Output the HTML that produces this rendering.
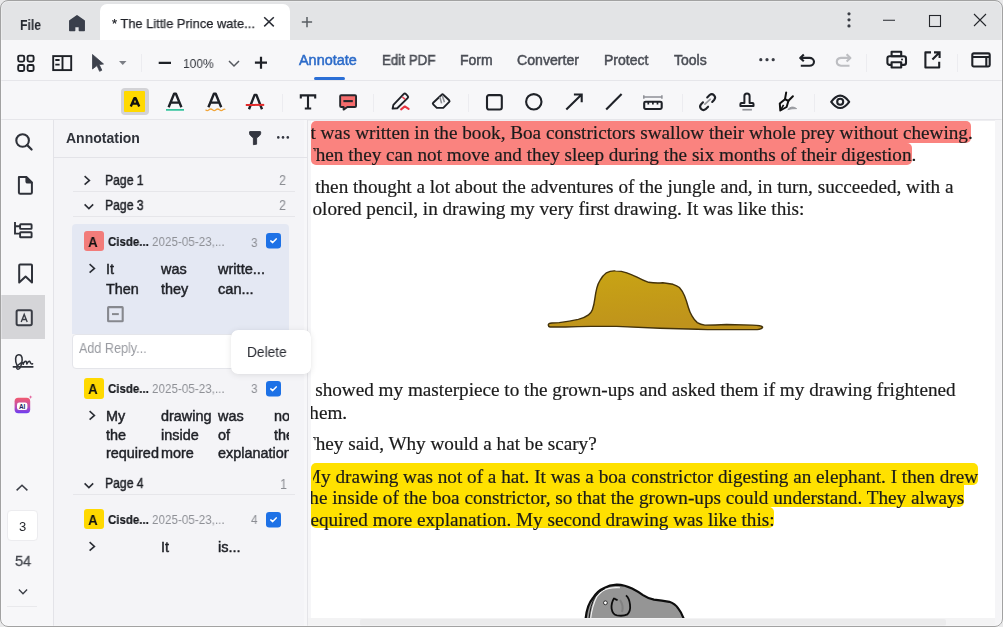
<!DOCTYPE html>
<html><head><meta charset="utf-8">
<style>
*{box-sizing:border-box;margin:0;padding:0}
html,body{width:1003px;height:627px;overflow:hidden;background:#e9e9ea}
body{font-family:"Liberation Sans",sans-serif;position:relative}
.abs{position:absolute}
#win{position:absolute;left:0;top:0;width:1003px;height:627px;border-radius:8px;overflow:hidden;background:#f7f7f9}
#frame{position:absolute;left:0;top:0;width:1003px;height:627px;border-radius:8px;border:1px solid #a2a2a2;box-shadow:inset 0 0 0 1px rgba(255,255,255,0.3);pointer-events:none}
svg{position:absolute;overflow:visible}
.t{position:absolute;white-space:nowrap;line-height:1;will-change:transform}
</style></head><body>
<div id="win">
<div class="abs" style="left:0px;top:0px;width:1003px;height:40px;background:#e3e4e6;"></div>
<div class="t" style="left:20.20px;top:18.45px;font-size:14px;font-weight:700;color:#25282f;font-family:'Liberation Sans',sans-serif;transform:scaleX(0.875);transform-origin:0 0;">File</div>
<svg style="left:66px;top:12px" width="22" height="22" viewBox="0 0 22 22"><path d="M3.8 8.9 L11 3.8 L18.2 8.9 V18.6 H13.4 V14.6 H8.6 V18.6 H3.8 Z" fill="#3a3f4b" stroke="#3a3f4b" stroke-width="1.5" stroke-linejoin="round"/></svg>
<div class="abs" style="left:100px;top:4px;width:190px;height:36px;background:#ffffff;border-radius:7px 7px 0 0;"></div>
<div class="t" style="left:112.00px;top:16.90px;font-size:13px;font-weight:400;color:#1f2127;font-family:'Liberation Sans',sans-serif;transform:scaleX(0.99);transform-origin:0 0;-webkit-text-stroke:0.25px #1f2127;">* The Little Prince wate...</div>
<svg style="left:262px;top:15px" width="14" height="14" viewBox="0 0 14 14"><path d="M2.2 2.3 L11.8 11.4 M11.8 2.3 L2.2 11.4" stroke="#2a2d35" stroke-width="1.5" fill="none"/></svg>
<svg style="left:300px;top:15px" width="14" height="14" viewBox="0 0 14 14"><path d="M7 1.9 V12.3 M1.8 7.1 H12.1" stroke="#5a5d63" stroke-width="1.5" fill="none"/></svg>
<svg style="left:844px;top:10px" width="10" height="20" viewBox="0 0 10 20"><circle cx="5" cy="3.8" r="1.6" fill="#3a3d45"/><circle cx="5" cy="9.8" r="1.6" fill="#3a3d45"/><circle cx="5" cy="15.9" r="1.6" fill="#3a3d45"/></svg>
<svg style="left:880px;top:14px" width="18" height="12" viewBox="0 0 18 12"><path d="M3 6.3 H15" stroke="#25272c" stroke-width="1.1"/></svg>
<svg style="left:926px;top:12px" width="18" height="18" viewBox="0 0 18 18"><rect x="3.5" y="3.5" width="11" height="11" fill="none" stroke="#25272c" stroke-width="1.1"/></svg>
<svg style="left:971px;top:11px" width="18" height="18" viewBox="0 0 18 18"><path d="M3 3 L15 15 M15 3 L3 15" stroke="#25272c" stroke-width="1.1"/></svg>
<div class="abs" style="left:0px;top:40px;width:1003px;height:40px;background:#f7f7f9;"></div>
<div class="abs" style="left:0px;top:80px;width:1003px;height:1px;background:#e6e6ea;"></div>
<svg style="left:16px;top:54px" width="20" height="19" viewBox="0 0 20 19"><g fill="none" stroke="#1e2127" stroke-width="1.9"><rect x="2.2" y="1.6" width="6" height="6" rx="1.5"/><rect x="11.6" y="1.6" width="6" height="6" rx="1.5"/><rect x="2.2" y="11" width="6" height="6" rx="1.5"/><rect x="11.6" y="11" width="6" height="6" rx="1.5"/></g></svg>
<svg style="left:51px;top:54px" width="22" height="18" viewBox="0 0 22 18"><g fill="none" stroke="#1e2127" stroke-width="1.9"><rect x="2.2" y="2.1" width="18" height="14"/><path d="M11.5 2.1 V16.1"/></g><path d="M4.3 6 H8.6 M4.3 10.6 H8.6" stroke="#1e2127" stroke-width="1.8"/></svg>
<svg style="left:90px;top:53px" width="16" height="20" viewBox="0 0 16 20"><path d="M2.5 1.5 L13.5 11 L9.2 11.6 L11.8 17.2 L9.6 18.3 L7 12.6 L2.5 16 Z" fill="#3d414c" stroke="#3d414c" stroke-width="0.8" stroke-linejoin="round"/></svg>
<svg style="left:117px;top:59px" width="12" height="8" viewBox="0 0 12 8"><path d="M2 2 H9.5 L5.75 6 Z" fill="#7b7e85"/></svg>
<div class="abs" style="left:141px;top:54px;width:1px;height:18px;background:#ececf0;"></div>
<svg style="left:156px;top:58px" width="18" height="10" viewBox="0 0 18 10"><path d="M2.7 4.8 H15" stroke="#1e2127" stroke-width="2.2"/></svg>
<div class="t" style="left:183.00px;top:57.20px;font-size:13px;font-weight:400;color:#33363d;font-family:'Liberation Sans',sans-serif;transform:scaleX(0.92);transform-origin:0 0;">100%</div>
<svg style="left:227px;top:58px" width="14" height="10" viewBox="0 0 14 10"><path d="M2 3 L7 8 L12 3" fill="none" stroke="#55585f" stroke-width="1.5"/></svg>
<svg style="left:252px;top:54px" width="18" height="18" viewBox="0 0 18 18"><path d="M9 2.7 V14.7 M2.9 8.7 H15" stroke="#1e2127" stroke-width="2.2"/></svg>
<div class="t" style="left:299.40px;top:53.25px;font-size:14px;font-weight:400;color:#2c6bc9;font-family:'Liberation Sans',sans-serif;transform:scaleX(1.03);transform-origin:0 0;-webkit-text-stroke:0.5px #2c6bc9;">Annotate</div>
<div class="abs" style="left:313.5px;top:77.2px;width:31.5px;height:2.8px;background:#2b6fd6;border-radius:2px;"></div>
<div class="t" style="left:382.00px;top:53.25px;font-size:14px;font-weight:400;color:#4b4e56;font-family:'Liberation Sans',sans-serif;transform:scaleX(0.955);transform-origin:0 0;-webkit-text-stroke:0.5px #4b4e56;">Edit PDF</div>
<div class="t" style="left:460.00px;top:53.25px;font-size:14px;font-weight:400;color:#4b4e56;font-family:'Liberation Sans',sans-serif;transform:scaleX(1.0);transform-origin:0 0;-webkit-text-stroke:0.5px #4b4e56;">Form</div>
<div class="t" style="left:517.00px;top:53.25px;font-size:14px;font-weight:400;color:#4b4e56;font-family:'Liberation Sans',sans-serif;transform:scaleX(1.01);transform-origin:0 0;-webkit-text-stroke:0.5px #4b4e56;">Converter</div>
<div class="t" style="left:604.00px;top:53.25px;font-size:14px;font-weight:400;color:#4b4e56;font-family:'Liberation Sans',sans-serif;transform:scaleX(1.0);transform-origin:0 0;-webkit-text-stroke:0.5px #4b4e56;">Protect</div>
<div class="t" style="left:674.30px;top:53.25px;font-size:14px;font-weight:400;color:#4b4e56;font-family:'Liberation Sans',sans-serif;transform:scaleX(1.0);transform-origin:0 0;-webkit-text-stroke:0.5px #4b4e56;">Tools</div>
<svg style="left:756px;top:55px" width="22" height="10" viewBox="0 0 22 10"><g fill="#3a3d45"><circle cx="4.8" cy="4.7" r="1.6"/><circle cx="11" cy="4.7" r="1.6"/><circle cx="17.2" cy="4.7" r="1.6"/></g></svg>
<svg style="left:796px;top:50px" width="22" height="20" viewBox="0 0 22 20"><path d="M4.6 7.9 H13.4 A4.6 3.95 0 0 1 13.4 15.8 H4.8" fill="none" stroke="#1f2228" stroke-width="2.1"/><path d="M7.8 4.4 L4.2 7.9 L7.8 11.3" fill="none" stroke="#1f2228" stroke-width="2.1" stroke-linejoin="round"/></svg>
<svg style="left:832px;top:50px" width="22" height="20" viewBox="0 0 22 20"><path d="M18 7.9 H9 A5 4 0 0 0 9 15.8 H17.5" fill="none" stroke="#bdbec2" stroke-width="2.1"/><path d="M14.6 4.2 L18.4 7.9 L14.6 11.4" fill="none" stroke="#bdbec2" stroke-width="2.1" stroke-linejoin="round"/></svg>
<div class="abs" style="left:866px;top:54px;width:1px;height:18px;background:#ececf0;"></div>
<svg style="left:884px;top:49px" width="24" height="22" viewBox="0 0 24 22"><g fill="none" stroke="#1e2127" stroke-width="2.1" stroke-linejoin="round"><rect x="3.4" y="7.3" width="18.6" height="8.6" rx="2.2"/><rect x="7.6" y="2.8" width="9.6" height="4.5"/><rect x="7.6" y="13.3" width="9.6" height="5.2" fill="#f7f7f9"/></g><circle cx="18" cy="10.4" r="1" fill="#1e2127"/></svg>
<svg style="left:921px;top:49px" width="22" height="22" viewBox="0 0 22 22"><path d="M10 3.4 H4.4 V18.5 H18.2 V12.8" fill="none" stroke="#1e2127" stroke-width="2.1" stroke-linejoin="round"/><path d="M11.4 10.4 L18.4 3.6 M13 3.4 H18.6 V9" fill="none" stroke="#1e2127" stroke-width="2.1"/></svg>
<div class="abs" style="left:957px;top:54px;width:1px;height:18px;background:#ececf0;"></div>
<svg style="left:969px;top:50px" width="24" height="20" viewBox="0 0 24 20"><g fill="none" stroke="#1e2127" stroke-width="2.1"><rect x="3.3" y="3.4" width="17.4" height="13.1" rx="1.4"/><path d="M3.3 7 H20.7 M17.3 7 V16.5"/></g></svg>
<div class="abs" style="left:0px;top:81px;width:1003px;height:38px;background:#f7f7f9;"></div>
<div class="abs" style="left:0px;top:119px;width:1003px;height:1px;background:#e6e6ea;"></div>
<div class="abs" style="left:121.2px;top:87.8px;width:27.6px;height:27.4px;background:#d3d3d6;border-radius:4px;"></div>
<div class="abs" style="left:123.8px;top:91px;width:21.5px;height:21.2px;background:#ffd900;border-radius:1px;"></div>
<svg style="left:126px;top:92px" width="18" height="20" viewBox="0 0 18 20"><path d="M4.8 14.4 L8.4 6.3 H9.6 L13.2 14.4 M6.4 11.6 H11.6" fill="none" stroke="#111" stroke-width="2.4" stroke-linejoin="round"/></svg>
<svg style="left:164px;top:90px" width="22" height="22" viewBox="0 0 22 22"><path d="M4.6 17.3 L10.1 3.8 H11.9 L17.4 17.3 M7.1 12.6 H14.9" fill="none" stroke="#1e2127" stroke-width="2.4" stroke-linejoin="round"/><path d="M2 19.9 H20" stroke="#34c39c" stroke-width="1.9"/></svg>
<svg style="left:203px;top:90px" width="24" height="22" viewBox="0 0 24 22"><path d="M5.4 17.3 L10.9 3.8 H12.7 L18.2 17.3 M7.9 12.6 H15.7" fill="none" stroke="#1e2127" stroke-width="2.4" stroke-linejoin="round"/><path d="M2.5 19.8 Q4.25 21.4 6 19.8 T9.5 19.8 T13 19.8 T16.5 19.8 T20 19.8 T22 19.9" fill="none" stroke="#f1a63c" stroke-width="1.2"/></svg>
<svg style="left:244px;top:90px" width="22" height="22" viewBox="0 0 22 22"><path d="M5 19.2 L10.6 4.9 H12.4 L18 19.2" fill="none" stroke="#1e2127" stroke-width="2.4" stroke-linejoin="round"/><path d="M1.8 14.9 H20.2" stroke="#e12b2b" stroke-width="2"/></svg>
<div class="abs" style="left:282px;top:94px;width:1px;height:18px;background:#ececf0;"></div>
<svg style="left:297px;top:91px" width="22" height="22" viewBox="0 0 22 22"><path d="M3.8 7.6 V4.4 H18.2 V7.6 M11 4.4 V17.5 M7.8 17.5 H14.2" fill="none" stroke="#1f2228" stroke-width="2.1"/></svg>
<svg style="left:336px;top:91px" width="24" height="22" viewBox="0 0 24 22"><path d="M5.2 4.25 H19 Q20.05 4.25 20.05 5.3 V14.9 Q20.05 15.95 19 15.95 H11.4 L7.6 18.6 V15.95 H5.2 Q4.15 15.95 4.15 14.9 V5.3 Q4.15 4.25 5.2 4.25 Z" fill="#f56c6c" stroke="#25272c" stroke-width="1.9" stroke-linejoin="round"/><path d="M7.4 10.1 H16.8" stroke="#25272c" stroke-width="2.1"/></svg>
<div class="abs" style="left:373px;top:94px;width:1px;height:18px;background:#ececf0;"></div>
<svg style="left:389px;top:90px" width="24" height="23" viewBox="0 0 24 23"><path d="M3.6 18.6 L4.4 14.9 L14.6 4.2 Q15.8 3 17 4.2 L18.6 5.8 Q19.8 7 18.6 8.2 L8.2 18.2 Z" fill="none" stroke="#1f2228" stroke-width="1.9" stroke-linejoin="round"/><path d="M13.3 6.9 L16.2 9.3" stroke="#e84a5a" stroke-width="1.7"/><path d="M12.1 19.4 L15.8 16.4 L19.6 18.9" fill="none" stroke="#e8333f" stroke-width="2" stroke-linecap="round" stroke-linejoin="round"/></svg>
<svg style="left:429px;top:90px" width="24" height="22" viewBox="0 0 24 22"><path d="M7.8 17.9 L4.2 14.3 Q3.4 13.5 4.2 12.7 L12.7 4.7 Q13.5 3.9 14.3 4.7 L20.2 10.3 Q21 11.1 20.2 11.9 L14.3 17.9 Z" fill="none" stroke="#1f2228" stroke-width="1.9" stroke-linejoin="round"/><path d="M10.8 6.9 L12.6 13.4 M13.4 5.7 L15.4 12.2" stroke="#8e9096" stroke-width="1.6"/></svg>
<div class="abs" style="left:468px;top:94px;width:1px;height:18px;background:#ececf0;"></div>
<svg style="left:484px;top:92px" width="20" height="20" viewBox="0 0 20 20"><rect x="3" y="3.1" width="14.8" height="14.4" rx="2" fill="none" stroke="#1f2228" stroke-width="2.1"/></svg>
<svg style="left:523px;top:91px" width="22" height="22" viewBox="0 0 22 22"><circle cx="10.8" cy="10.8" r="7.7" fill="none" stroke="#1f2228" stroke-width="2.1"/></svg>
<svg style="left:563px;top:91px" width="22" height="22" viewBox="0 0 22 22"><path d="M3.3 18.5 L18.6 3.6 M10.9 3.5 H18.7 V11.3" fill="none" stroke="#1f2228" stroke-width="2.1"/></svg>
<svg style="left:603px;top:91px" width="22" height="22" viewBox="0 0 22 22"><path d="M3.2 18.6 L18.6 3.1" stroke="#1f2228" stroke-width="2.1"/></svg>
<svg style="left:641px;top:91px" width="24" height="22" viewBox="0 0 24 22"><path d="M2.8 4.2 V7.7 M20.9 4.2 V7.7 M2.8 5.9 H20.9" fill="none" stroke="#8e9096" stroke-width="1.5"/><rect x="3.2" y="10.7" width="17.5" height="7.3" rx="1.4" fill="none" stroke="#1f2228" stroke-width="2.1"/><path d="M7.3 10.7 V13.6 M11.9 10.7 V13.6 M16.5 10.7 V13.6" stroke="#1f2228" stroke-width="1.7"/></svg>
<div class="abs" style="left:682px;top:94px;width:1px;height:18px;background:#ececf0;"></div>
<svg style="left:696px;top:91px" width="24" height="22" viewBox="0 0 24 22"><path d="M11.2 6.5 L13.6 4 A3.35 3.35 0 0 1 18.3 8.7 L16.2 10.9 M12.1 15.7 L9.6 18.2 A3.35 3.35 0 0 1 4.9 13.5 L7 11.3" fill="none" stroke="#1f2228" stroke-width="2.1" stroke-linecap="round"/><path d="M8.9 13.1 L14.1 8.3" stroke="#9a9ca1" stroke-width="1.8" stroke-linecap="round"/></svg>
<svg style="left:736px;top:90px" width="22" height="23" viewBox="0 0 22 23"><path d="M8.4 13.1 V6.1 A2.6 2.6 0 0 1 13.6 6.1 V13.1 H16.5 Q17.5 13.1 17.5 14.1 V16.1 H4.4 V14.1 Q4.4 13.1 5.4 13.1 Z" fill="none" stroke="#1f2228" stroke-width="2" stroke-linejoin="round"/><path d="M6.4 19.7 H15.9" stroke="#8e9096" stroke-width="1.7"/></svg>
<svg style="left:770px;top:86px" width="32" height="30" viewBox="0 0 32 30"><g transform="translate(-770,-86)"><path d="M786.2 92.4 L785 99.2 M792.9 96.2 L788.2 101" fill="none" stroke="#111" stroke-width="2" stroke-linecap="round"/><path d="M785 99.2 L788.4 101 L786.6 107 L780.3 110.5 L779.8 103.6 Z" fill="none" stroke="#111" stroke-width="2" stroke-linejoin="round"/><path d="M780.6 110 L783.6 104.8" stroke="#111" stroke-width="1.6"/><path d="M787.8 109.6 Q791.6 105 796.6 108.6 Q792 108.4 787.8 109.6 Z" fill="#8e9096" stroke="#9a9ca1" stroke-width="1"/></g></svg>
<div class="abs" style="left:814px;top:94px;width:1px;height:18px;background:#ececf0;"></div>
<svg style="left:828px;top:90px" width="24" height="22" viewBox="0 0 24 22"><path d="M3.2 11.8 Q12.2 -0.6 21.2 11.8 Q12.2 24.2 3.2 11.8 Z" fill="none" stroke="#1f2228" stroke-width="2.1" stroke-linejoin="round"/><circle cx="12.2" cy="11.7" r="3" fill="none" stroke="#1f2228" stroke-width="2.1"/></svg>
<div class="abs" style="left:0px;top:120px;width:53px;height:507px;background:#f7f7f9;"></div>
<div class="abs" style="left:53px;top:120px;width:1px;height:507px;background:#e3e3e8;"></div>
<svg style="left:12px;top:130px" width="24" height="24" viewBox="0 0 24 24"><circle cx="10.6" cy="10.5" r="6.3" fill="none" stroke="#2f323a" stroke-width="2.1"/><path d="M15.2 15.1 L19.6 19.5" stroke="#2f323a" stroke-width="2.2" stroke-linecap="round"/></svg>
<svg style="left:14px;top:174px" width="22" height="22" viewBox="0 0 22 22"><path d="M4.9 3.1 H12.6 L17.9 8.4 V18.4 Q17.9 19.8 16.5 19.8 H6.3 Q4.9 19.8 4.9 18.4 Z" fill="none" stroke="#2f323a" stroke-width="2" stroke-linejoin="round"/><path d="M12.4 3.4 V7.4 Q12.4 8.6 13.6 8.6 H17.6 Z" fill="#2f323a" stroke="#2f323a" stroke-width="2" stroke-linejoin="round"/></svg>
<svg style="left:12px;top:219px" width="24" height="22" viewBox="0 0 24 22"><path d="M3 3 V14.6 H8" fill="none" stroke="#2f323a" stroke-width="1.9"/><path d="M3 7.3 H8" stroke="#2f323a" stroke-width="1.9"/><rect x="8.1" y="5.3" width="11.5" height="4.6" rx="0.6" fill="none" stroke="#2f323a" stroke-width="1.9"/><rect x="8.1" y="13.3" width="11.5" height="5" rx="0.6" fill="none" stroke="#2f323a" stroke-width="1.9"/></svg>
<svg style="left:14px;top:261px" width="22" height="24" viewBox="0 0 22 24"><path d="M5.2 4.5 Q5.2 3.6 6.1 3.6 H17.1 Q18 3.6 18 4.5 V21.5 L11.6 15.5 L5.2 21.5 Z" fill="none" stroke="#2f323a" stroke-width="2" stroke-linejoin="round"/></svg>
<div class="abs" style="left:1px;top:295px;width:43.7px;height:43.7px;background:#d5d5d8;"></div>
<svg style="left:12px;top:306px" width="24" height="24" viewBox="0 0 24 24"><rect x="4.6" y="4.2" width="15.2" height="15" rx="1.6" fill="#e6e6e8" stroke="#3a3d45" stroke-width="2"/><path d="M9.2 16.1 L12.2 8.4 L15.2 16.1 M10.3 13.5 H14.1" fill="none" stroke="#3a3d45" stroke-width="1.35"/></svg>
<svg style="left:0px;top:340px" width="40" height="40" viewBox="0 0 40 40"><g transform="translate(0,-340)" fill="none" stroke="#2f323a" stroke-width="1.55" stroke-linecap="round" stroke-linejoin="round"><path d="M17 365.4 C15 361 14.8 355 18.6 354.7 C22.4 354.4 22.8 359.6 21.6 363.6 C20.8 366.8 20 369.3 17.9 369.2 C15.9 369 16.6 365.6 19.6 363.8 C21.4 362.6 22.6 362.2 23.1 362.9 L23.3 364.3 M23.2 363.6 C24.2 361.6 25.8 360.6 26.5 361.8 L26.9 364 C27.7 361.8 29.3 360.4 30 361.8 C30.5 363.2 31.3 364.4 32.6 363.8"/><path d="M13.4 366.8 H32.8" stroke-width="1.7"/></g></svg>
<svg style="left:12px;top:393px" width="24" height="24" viewBox="0 0 24 24"><defs><linearGradient id="aig" x1="0" y1="0" x2="0" y2="1"><stop offset="0" stop-color="#f25a6e"/><stop offset="0.55" stop-color="#c04fb0"/><stop offset="1" stop-color="#6a3cf2"/></linearGradient></defs><rect x="2.6" y="4.8" width="15.6" height="15.4" rx="3.6" fill="url(#aig)"/><rect x="5" y="9.6" width="10.4" height="7.4" rx="2.2" fill="#fff"/><text x="10.2" y="15.6" font-family="Liberation Sans" font-weight="700" font-size="6.4" fill="#1b2260" text-anchor="middle">AI</text><path d="M18.6 2.2 L19.1 3.6 L20.5 4.1 L19.1 4.6 L18.6 6 L18.1 4.6 L16.7 4.1 L18.1 3.6 Z" fill="#e2609a"/></svg>
<svg style="left:13px;top:480px" width="18" height="14" viewBox="0 0 18 14"><path d="M3.6 10.4 L9 5.2 L14.4 10.4" fill="none" stroke="#3b3e46" stroke-width="1.5"/></svg>
<div class="abs" style="left:6.5px;top:510.2px;width:31px;height:30.8px;background:#ffffff;border:1px solid #ececef;border-radius:4px;"></div>
<div class="t" style="left:18.50px;top:519.80px;font-size:13px;font-weight:400;color:#25272c;font-family:'Liberation Sans',sans-serif;">3</div>
<div class="t" style="left:14.50px;top:552.70px;font-size:15px;font-weight:400;color:#44474e;font-family:'Liberation Sans',sans-serif;transform:scaleX(0.97);transform-origin:0 0;-webkit-text-stroke:0.3px #44474e;">54</div>
<svg style="left:15px;top:585px" width="16" height="12" viewBox="0 0 16 12"><path d="M3.9 4.6 L8 8.7 L12.1 4.6" fill="none" stroke="#3b3e46" stroke-width="1.35"/></svg>
<div class="abs" style="left:7px;top:606px;width:30px;height:1px;background:#e9e9ec;"></div>
<div class="abs" style="left:54px;top:120px;width:253px;height:507px;background:#f4f4f7;"></div>
<div class="abs" style="left:304px;top:120px;width:2.5px;height:507px;background:#f7f7f9;"></div>
<div class="abs" style="left:306.5px;top:120px;width:1px;height:507px;background:#e4e4e8;"></div>
<div class="t" style="left:66.20px;top:131.15px;font-size:14px;font-weight:700;color:#2f323a;font-family:'Liberation Sans',sans-serif;">Annotation</div>
<svg style="left:246px;top:128px" width="18" height="20" viewBox="0 0 18 20"><path d="M3.5 4 Q3.5 3.5 4 3.5 H14.2 Q14.7 3.5 14.7 4 V5.2 Q14.7 6.6 13.6 7.6 L10.6 10 V16.2 L7.4 16.7 V10 L4.6 7.6 Q3.5 6.6 3.5 5.2 Z" fill="#333640" stroke="#333640" stroke-width="0.9" stroke-linejoin="round"/></svg>
<svg style="left:274px;top:133px" width="18" height="9" viewBox="0 0 18 9"><g fill="#333640"><circle cx="4.3" cy="4.4" r="1.3"/><circle cx="9" cy="4.4" r="1.3"/><circle cx="13.8" cy="4.4" r="1.3"/></g></svg>
<div class="abs" style="left:54px;top:157px;width:253px;height:1px;background:#e3e3e8;"></div>
<svg style="left:80.7px;top:173.2px" width="12" height="14" viewBox="0 0 12 14"><path d="M3.6 3.2 L8.4 7.4 L3.6 11.6" fill="none" stroke="#2b2e36" stroke-width="1.6"/></svg>
<div class="t" style="left:105.40px;top:173.15px;font-size:14px;font-weight:400;color:#1f2127;font-family:'Liberation Sans',sans-serif;transform:scaleX(0.87);transform-origin:0 0;-webkit-text-stroke:0.45px #1f2127;">Page 1</div>
<div class="t" style="left:279.30px;top:173.45px;font-size:14px;font-weight:400;color:#8b8d93;font-family:'Liberation Sans',sans-serif;transform:scaleX(0.9);transform-origin:0 0;">2</div>
<div class="abs" style="left:72.5px;top:191px;width:222px;height:1px;background:#e6e6ea;"></div>
<svg style="left:80.7px;top:200px" width="15" height="12" viewBox="0 0 15 12"><path d="M3.6 4.4 L7.9 8.6 L12.2 4.4" fill="none" stroke="#2b2e36" stroke-width="1.6"/></svg>
<div class="t" style="left:105.40px;top:198.05px;font-size:14px;font-weight:400;color:#1f2127;font-family:'Liberation Sans',sans-serif;transform:scaleX(0.87);transform-origin:0 0;-webkit-text-stroke:0.45px #1f2127;">Page 3</div>
<div class="t" style="left:279.30px;top:198.35px;font-size:14px;font-weight:400;color:#8b8d93;font-family:'Liberation Sans',sans-serif;transform:scaleX(0.9);transform-origin:0 0;">2</div>
<div class="abs" style="left:72.5px;top:216px;width:222px;height:1px;background:#e6e6ea;"></div>
<div class="abs" style="left:72px;top:223.7px;width:216.8px;height:110.6px;background:#e4e8f3;border-radius:4px 4px 0 0;"></div>
<div class="abs" style="left:83.7px;top:230.5px;width:20.7px;height:20.6px;background:#f27c7a;border-radius:3px;"></div>
<div class="t" style="left:88.40px;top:233.60px;font-size:15px;font-weight:700;color:#111;font-family:'Liberation Sans',sans-serif;transform:scaleX(0.9);transform-origin:0 0;">A</div>
<div class="t" style="left:107.90px;top:235.27px;font-size:13.5px;font-weight:700;color:#16181d;font-family:'Liberation Sans',sans-serif;transform:scaleX(0.85);transform-origin:0 0;-webkit-text-stroke:0.2px #16181d;">Cisde...</div>
<div class="t" style="left:152.20px;top:235.27px;font-size:13.5px;font-weight:400;color:#8e9096;font-family:'Liberation Sans',sans-serif;transform:scaleX(0.865);transform-origin:0 0;">2025-05-23,...</div>
<div class="t" style="left:250.90px;top:235.57px;font-size:13.5px;font-weight:400;color:#8b8d93;font-family:'Liberation Sans',sans-serif;transform:scaleX(0.88);transform-origin:0 0;">3</div>
<svg style="left:264.6px;top:232px" width="17" height="17" viewBox="0 0 17 17"><rect x="1" y="1" width="15" height="15.4" rx="3.2" fill="#1d71e6"/><path d="M5.8 8.9 L7.7 10.6 L11.2 6.9" fill="none" stroke="#fff" stroke-width="1.5" stroke-linecap="round" stroke-linejoin="round"/></svg>
<svg style="left:86.4px;top:260.6px" width="12" height="14" viewBox="0 0 12 14"><path d="M3.6 3.2 L8.4 7.4 L3.6 11.6" fill="none" stroke="#2b2e36" stroke-width="1.6"/></svg>
<div class="t" style="left:106.10px;top:262.45px;font-size:14px;font-weight:400;color:#1f2127;font-family:'Liberation Sans',sans-serif;transform:scaleX(1.03);transform-origin:0 0;-webkit-text-stroke:0.45px #1f2127;">It</div>
<div class="t" style="left:161.40px;top:262.45px;font-size:14px;font-weight:400;color:#1f2127;font-family:'Liberation Sans',sans-serif;transform:scaleX(1.03);transform-origin:0 0;-webkit-text-stroke:0.45px #1f2127;">was</div>
<div class="t" style="left:217.50px;top:262.45px;font-size:14px;font-weight:400;color:#1f2127;font-family:'Liberation Sans',sans-serif;transform:scaleX(1.04);transform-origin:0 0;-webkit-text-stroke:0.45px #1f2127;">writte...</div>
<div class="t" style="left:106.10px;top:281.65px;font-size:14px;font-weight:400;color:#1f2127;font-family:'Liberation Sans',sans-serif;transform:scaleX(1.03);transform-origin:0 0;-webkit-text-stroke:0.45px #1f2127;">Then</div>
<div class="t" style="left:161.40px;top:281.65px;font-size:14px;font-weight:400;color:#1f2127;font-family:'Liberation Sans',sans-serif;transform:scaleX(1.03);transform-origin:0 0;-webkit-text-stroke:0.45px #1f2127;">they</div>
<div class="t" style="left:217.50px;top:281.65px;font-size:14px;font-weight:400;color:#1f2127;font-family:'Liberation Sans',sans-serif;transform:scaleX(1.04);transform-origin:0 0;-webkit-text-stroke:0.45px #1f2127;">can...</div>
<svg style="left:105px;top:304px" width="20" height="20" viewBox="0 0 20 20"><rect x="3.1" y="3.1" width="14.6" height="14.2" rx="0.6" fill="none" stroke="#86888e" stroke-width="2.1"/><path d="M7 10.1 H13.8" stroke="#86888e" stroke-width="2"/></svg>
<div class="abs" style="left:71.7px;top:334.3px;width:217.3px;height:35.1px;background:#ffffff;border:1px solid #e4e5ea;border-radius:4px;"></div>
<div class="t" style="left:78.70px;top:341.35px;font-size:14px;font-weight:400;color:#9a9ca2;font-family:'Liberation Sans',sans-serif;transform:scaleX(0.9);transform-origin:0 0;">Add Reply...</div>
<div class="abs" style="left:83.7px;top:378px;width:20.7px;height:20.6px;background:#ffd900;border-radius:3px;"></div>
<div class="t" style="left:88.40px;top:381.10px;font-size:15px;font-weight:700;color:#111;font-family:'Liberation Sans',sans-serif;transform:scaleX(0.9);transform-origin:0 0;">A</div>
<div class="t" style="left:107.90px;top:381.57px;font-size:13.5px;font-weight:700;color:#16181d;font-family:'Liberation Sans',sans-serif;transform:scaleX(0.85);transform-origin:0 0;-webkit-text-stroke:0.2px #16181d;">Cisde...</div>
<div class="t" style="left:152.20px;top:381.57px;font-size:13.5px;font-weight:400;color:#8e9096;font-family:'Liberation Sans',sans-serif;transform:scaleX(0.865);transform-origin:0 0;">2025-05-23,...</div>
<div class="t" style="left:250.90px;top:381.87px;font-size:13.5px;font-weight:400;color:#8b8d93;font-family:'Liberation Sans',sans-serif;transform:scaleX(0.88);transform-origin:0 0;">3</div>
<svg style="left:264.6px;top:379.5px" width="17" height="17" viewBox="0 0 17 17"><rect x="1" y="1" width="15" height="15.4" rx="3.2" fill="#1d71e6"/><path d="M5.8 8.9 L7.7 10.6 L11.2 6.9" fill="none" stroke="#fff" stroke-width="1.5" stroke-linecap="round" stroke-linejoin="round"/></svg>
<svg style="left:86.4px;top:408px" width="12" height="14" viewBox="0 0 12 14"><path d="M3.6 3.2 L8.4 7.4 L3.6 11.6" fill="none" stroke="#2b2e36" stroke-width="1.6"/></svg>
<div class="abs" style="left:100px;top:400px;width:188.8px;height:70px;overflow:hidden">
<div class="t" style="left:6.10px;top:9.25px;font-size:14px;font-weight:400;color:#1f2127;font-family:'Liberation Sans',sans-serif;transform:scaleX(1.03);transform-origin:0 0;-webkit-text-stroke:0.45px #1f2127;">My</div>
<div class="t" style="left:61.40px;top:9.25px;font-size:14px;font-weight:400;color:#1f2127;font-family:'Liberation Sans',sans-serif;transform:scaleX(1.03);transform-origin:0 0;-webkit-text-stroke:0.45px #1f2127;">drawing</div>
<div class="t" style="left:117.50px;top:9.25px;font-size:14px;font-weight:400;color:#1f2127;font-family:'Liberation Sans',sans-serif;transform:scaleX(1.03);transform-origin:0 0;-webkit-text-stroke:0.45px #1f2127;">was</div>
<div class="t" style="left:173.60px;top:9.25px;font-size:14px;font-weight:400;color:#1f2127;font-family:'Liberation Sans',sans-serif;transform:scaleX(1.03);transform-origin:0 0;-webkit-text-stroke:0.45px #1f2127;">no</div>
<div class="t" style="left:6.10px;top:27.55px;font-size:14px;font-weight:400;color:#1f2127;font-family:'Liberation Sans',sans-serif;transform:scaleX(1.03);transform-origin:0 0;-webkit-text-stroke:0.45px #1f2127;">the</div>
<div class="t" style="left:61.40px;top:27.55px;font-size:14px;font-weight:400;color:#1f2127;font-family:'Liberation Sans',sans-serif;transform:scaleX(1.03);transform-origin:0 0;-webkit-text-stroke:0.45px #1f2127;">inside</div>
<div class="t" style="left:117.50px;top:27.55px;font-size:14px;font-weight:400;color:#1f2127;font-family:'Liberation Sans',sans-serif;transform:scaleX(1.03);transform-origin:0 0;-webkit-text-stroke:0.45px #1f2127;">of</div>
<div class="t" style="left:173.60px;top:27.55px;font-size:14px;font-weight:400;color:#1f2127;font-family:'Liberation Sans',sans-serif;transform:scaleX(1.03);transform-origin:0 0;-webkit-text-stroke:0.45px #1f2127;">the</div>
<div class="t" style="left:6.10px;top:45.85px;font-size:14px;font-weight:400;color:#1f2127;font-family:'Liberation Sans',sans-serif;transform:scaleX(1.03);transform-origin:0 0;-webkit-text-stroke:0.45px #1f2127;">required</div>
<div class="t" style="left:61.40px;top:45.85px;font-size:14px;font-weight:400;color:#1f2127;font-family:'Liberation Sans',sans-serif;transform:scaleX(1.03);transform-origin:0 0;-webkit-text-stroke:0.45px #1f2127;">more</div>
<div class="t" style="left:117.50px;top:45.85px;font-size:14px;font-weight:400;color:#1f2127;font-family:'Liberation Sans',sans-serif;transform:scaleX(1.03);transform-origin:0 0;-webkit-text-stroke:0.45px #1f2127;">explanation</div>
</div>
<svg style="left:80.7px;top:479px" width="15" height="12" viewBox="0 0 15 12"><path d="M3.6 4.4 L7.9 8.6 L12.2 4.4" fill="none" stroke="#2b2e36" stroke-width="1.6"/></svg>
<div class="t" style="left:105.40px;top:476.15px;font-size:14px;font-weight:400;color:#1f2127;font-family:'Liberation Sans',sans-serif;transform:scaleX(0.87);transform-origin:0 0;-webkit-text-stroke:0.45px #1f2127;">Page 4</div>
<div class="t" style="left:279.80px;top:476.55px;font-size:14px;font-weight:400;color:#8b8d93;font-family:'Liberation Sans',sans-serif;transform:scaleX(0.9);transform-origin:0 0;">1</div>
<div class="abs" style="left:72.5px;top:493.5px;width:222px;height:1px;background:#e6e6ea;"></div>
<div class="abs" style="left:83.7px;top:508.7px;width:20.7px;height:20.6px;background:#ffd900;border-radius:3px;"></div>
<div class="t" style="left:88.40px;top:511.80px;font-size:15px;font-weight:700;color:#111;font-family:'Liberation Sans',sans-serif;transform:scaleX(0.9);transform-origin:0 0;">A</div>
<div class="t" style="left:107.90px;top:512.67px;font-size:13.5px;font-weight:700;color:#16181d;font-family:'Liberation Sans',sans-serif;transform:scaleX(0.85);transform-origin:0 0;-webkit-text-stroke:0.2px #16181d;">Cisde...</div>
<div class="t" style="left:152.20px;top:512.67px;font-size:13.5px;font-weight:400;color:#8e9096;font-family:'Liberation Sans',sans-serif;transform:scaleX(0.865);transform-origin:0 0;">2025-05-23,...</div>
<div class="t" style="left:250.90px;top:512.97px;font-size:13.5px;font-weight:400;color:#8b8d93;font-family:'Liberation Sans',sans-serif;transform:scaleX(0.88);transform-origin:0 0;">4</div>
<svg style="left:264.6px;top:511px" width="17" height="17" viewBox="0 0 17 17"><rect x="1" y="1" width="15" height="15.4" rx="3.2" fill="#1d71e6"/><path d="M5.8 8.9 L7.7 10.6 L11.2 6.9" fill="none" stroke="#fff" stroke-width="1.5" stroke-linecap="round" stroke-linejoin="round"/></svg>
<svg style="left:86.4px;top:538.8px" width="12" height="14" viewBox="0 0 12 14"><path d="M3.6 3.2 L8.4 7.4 L3.6 11.6" fill="none" stroke="#2b2e36" stroke-width="1.6"/></svg>
<div class="t" style="left:161.40px;top:539.95px;font-size:14px;font-weight:400;color:#1f2127;font-family:'Liberation Sans',sans-serif;transform:scaleX(1.03);transform-origin:0 0;-webkit-text-stroke:0.45px #1f2127;">It</div>
<div class="t" style="left:217.50px;top:539.95px;font-size:14px;font-weight:400;color:#1f2127;font-family:'Liberation Sans',sans-serif;transform:scaleX(1.04);transform-origin:0 0;-webkit-text-stroke:0.45px #1f2127;">is...</div>
<div class="abs" style="left:308px;top:120px;width:695px;height:507px;background:#ffffff;"></div>
<div class="abs" style="left:307.5px;top:120px;width:3.5px;height:507px;background:#f6f6f8;"></div>
<div class="abs" style="left:308px;top:119.5px;width:687px;height:1.5px;background:#eeeef1;"></div>
<div class="abs" style="left:995px;top:120px;width:8px;height:507px;background:#f5f5f7;"></div>
<div class="abs" style="left:311px;top:121px;width:684px;height:497px;overflow:hidden">
<div class="abs" style="left:0px;top:0.09999999999999432px;width:659.8px;height:21.80000000000001px;background:#fa837f;border-radius:5px 5px 5px 0;"></div>
<div class="abs" style="left:0px;top:21.599999999999994px;width:601px;height:22.099999999999994px;background:#fa837f;border-radius:0 5px 5px 5px;"></div>
<div class="abs" style="left:0px;top:342.3px;width:666.8px;height:21.30000000000001px;background:#ffe100;border-radius:5px 5px 5px 0;"></div>
<div class="abs" style="left:0px;top:363.3px;width:652.8px;height:22.599999999999966px;background:#ffe100;border-radius:0 0 5px 0;"></div>
<div class="abs" style="left:0px;top:385.7px;width:463.29999999999995px;height:21.69999999999999px;background:#ffe100;border-radius:0 5px 5px 5px;"></div>
<div class="t" style="left:-7.20px;top:1.82px;font-size:19.2px;font-weight:400;color:#1b1b1b;font-family:'Liberation Serif',serif;-webkit-text-stroke:0.2px #1b1b1b;">It was written in the book, Boa constrictors swallow their whole prey without chewing.</div>
<div class="abs" style="left:2.1999999999999886px;top:19.69999999999999px;width:681.8px;height:28px;overflow:hidden">
<div class="t" style="left:-8.90px;top:4.12px;font-size:19.2px;font-weight:400;color:#1b1b1b;font-family:'Liberation Serif',serif;-webkit-text-stroke:0.2px #1b1b1b;">Then they can not move and they sleep during the six months of their digestion.</div>
</div>
<div class="t" style="left:-7.20px;top:55.72px;font-size:19.2px;font-weight:400;color:#1b1b1b;font-family:'Liberation Serif',serif;-webkit-text-stroke:0.2px #1b1b1b;">I then thought a lot about the adventures of the jungle and, in turn, succeeded, with a</div>
<div class="abs" style="left:1.3000000000000114px;top:73.5px;width:682.7px;height:28px;overflow:hidden">
<div class="t" style="left:-8.50px;top:4.12px;font-size:19.2px;font-weight:400;color:#1b1b1b;font-family:'Liberation Serif',serif;-webkit-text-stroke:0.2px #1b1b1b;">colored pencil, in drawing my very first drawing. It was like this:</div>
</div>
<div class="t" style="left:-7.20px;top:259.32px;font-size:19.2px;font-weight:400;color:#1b1b1b;font-family:'Liberation Serif',serif;-webkit-text-stroke:0.2px #1b1b1b;">I showed my masterpiece to the grown-ups and asked them if my drawing frightened</div>
<div class="t" style="left:-7.20px;top:282.32px;font-size:19.2px;font-weight:400;color:#1b1b1b;font-family:'Liberation Serif',serif;-webkit-text-stroke:0.2px #1b1b1b;">them.</div>
<div class="abs" style="left:2.1999999999999886px;top:308.5px;width:681.8px;height:28px;overflow:hidden">
<div class="t" style="left:-9.40px;top:4.82px;font-size:19.2px;font-weight:400;color:#1b1b1b;font-family:'Liberation Serif',serif;-webkit-text-stroke:0.2px #1b1b1b;">They said, Why would a hat be scary?</div>
</div>
<div class="abs" style="left:1.6000000000000227px;top:340.8px;width:682.4px;height:28px;overflow:hidden">
<div class="t" style="left:-8.80px;top:4.82px;font-size:19.2px;font-weight:400;color:#1b1b1b;font-family:'Liberation Serif',serif;-webkit-text-stroke:0.2px #1b1b1b;">My drawing was not of a hat. It was a boa constrictor digesting an elephant. I then drew</div>
</div>
<div class="t" style="left:-7.20px;top:367.32px;font-size:19.2px;font-weight:400;color:#1b1b1b;font-family:'Liberation Serif',serif;-webkit-text-stroke:0.2px #1b1b1b;">the inside of the boa constrictor, so that the grown-ups could understand. They always</div>
<div class="t" style="left:-7.20px;top:389.02px;font-size:19.2px;font-weight:400;color:#1b1b1b;font-family:'Liberation Serif',serif;-webkit-text-stroke:0.2px #1b1b1b;">required more explanation. My second drawing was like this:</div>
<svg style="left:229px;top:141px" width="232" height="76" viewBox="0 0 232 76"><defs><linearGradient id="hatg" x1="0" y1="0" x2="0.3" y2="1"><stop offset="0" stop-color="#c9a514"/><stop offset="0.6" stop-color="#c39a18"/><stop offset="1" stop-color="#bf931c"/></linearGradient></defs><g transform="translate(-540,-262)"><path d="M548.3 325.1 Q548 323.4 552 323 L559.2 322.6 Q570 321.4 578.3 319.4 Q585 317.6 588.5 314.9 Q591.4 312.6 592.4 309.8 Q594 305 594.9 298.3 Q595.8 292 596.8 288.1 Q598 283.6 600 280.4 Q602.6 275.6 606.4 272.8 Q610.4 270.6 615.4 270.9 Q621.6 271 626.8 272.8 Q632 274.6 637 277.2 Q642.8 280.4 648.6 282.3 Q654 283.2 660 283 L662.8 282.7 Q668 283.2 673 284.3 Q677 285.6 679.4 287.5 Q682.4 290.8 684.5 295.8 Q686.6 301 688.3 307.3 Q689.8 312.6 692.1 316.2 Q694.4 320.4 697.3 322.6 Q700.6 324.6 704.9 325.1 Q715 325 726.6 324.5 L752.2 325.1 Q757 325.2 759.8 325.8 Q763.2 326.4 762.4 327.7 Q761.4 329.4 757.3 329.6 L726.6 329.6 L707.5 329.6 Q697 329.4 688.3 329 Q670 328.6 660 328.3 Q640 327.4 616.6 326.4 L591 326.4 Q578 326.8 565.5 327 L550 327 Q548.4 326.6 548.3 325.1 Z" fill="url(#hatg)" stroke="#43320a" stroke-width="1.4" stroke-linejoin="round"/></g></svg>
<svg style="left:259px;top:454px" width="130" height="50" viewBox="0 0 130 50"><g transform="translate(-570,-575)"><path d="M585.6 619 Q587 605 592.6 598.5 Q597 591 603.6 588.2 Q609.6 585 616.8 584.7 Q625 585 632.1 588.6 Q638 591.6 643 595.2 Q648 598.6 654 599.6 Q662 600.4 669.4 601.8 Q675 603.6 678.2 608.4 Q681.6 612.6 683.8 619 Z" fill="#959595" stroke="#0d0d0d" stroke-width="2.2" stroke-linejoin="round"/><path d="M590.6 619 Q592 606 597 596.5 Q602 590 608 588.6 Q614 587.2 620 587.8" fill="none" stroke="#f4f4f4" stroke-width="1.1"/><path d="M589 619 Q590.4 605 595 597 Q599.4 591 605 588.6" fill="none" stroke="#0d0d0d" stroke-width="0.9"/><path d="M614.2 598 Q611 603 611.6 608.6 Q612.6 614.6 617 615.4 Q623.4 616.4 627.4 614.4 Q630.8 611 630 604.6 Q629.4 598.4 626 595.4 M614.2 598 Q616.4 600.6 617.6 599.4" fill="none" stroke="#0d0d0d" stroke-width="1.8" stroke-linejoin="round"/><path d="M620 600 Q624 606 622 612" fill="none" stroke="#6d6d6d" stroke-width="2" opacity="0.5"/><circle cx="605.4" cy="602.8" r="1.9" fill="#fff" stroke="#222" stroke-width="0.9"/></g></svg>
</div>
<div class="abs" style="left:308px;top:618px;width:687px;height:8px;background:#f3f3f4;"></div>
<div class="abs" style="left:360px;top:618.5px;width:586px;height:7px;background:#ebebec;border-radius:2px;"></div>
<div class="abs" style="left:231px;top:329.8px;width:79.9px;height:44.1px;background:#ffffff;border-radius:7px;box-shadow:0 1px 6px rgba(0,0,0,0.10),0 0 1px rgba(0,0,0,0.08);"></div>
<div class="t" style="left:247.10px;top:345.15px;font-size:14px;font-weight:400;color:#2a2c33;font-family:'Liberation Sans',sans-serif;transform:scaleX(0.98);transform-origin:0 0;">Delete</div>
</div>
<div id="frame"></div>
</body></html>
